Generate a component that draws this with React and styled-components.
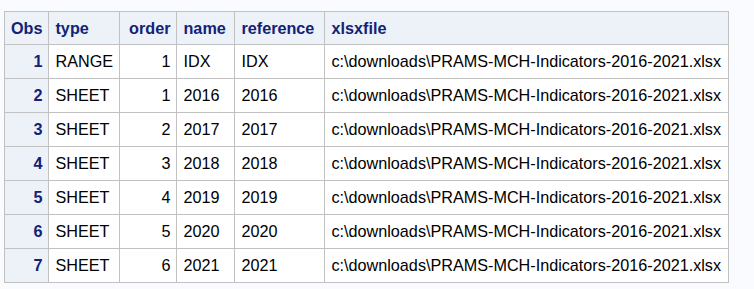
import React from 'react';
import styled, { createGlobalStyle } from 'styled-components';

const GlobalStyle = createGlobalStyle`
  html, body {
    margin: 0;
    padding: 0;
    background-color: #FAFBFE;
  }
`;

const Page = styled.div`
  padding: 11px 0 0 4px;
  min-height: 289px;
  box-sizing: border-box;
  background-color: #FAFBFE;
  font-family: 'Liberation Sans', Arial, sans-serif;
  font-size: 16.2px;
`;

const Table = styled.table`
  border-collapse: collapse;
  border-spacing: 0;
  table-layout: fixed;
  background-color: #fff;
  border: 1px solid #C1C1C1;
`;

const HeadCell = styled.th`
  background-color: #EDF2F9;
  color: #112277;
  font-weight: bold;
  text-align: ${(p) => (p.$right ? 'right' : 'left')};
  border: 1px solid #C1C1C1;
  height: 33px;
  padding: 0 6px 0 6px;
  white-space: nowrap;
  box-sizing: border-box;
`;

const ObsCell = styled.th`
  background-color: #EDF2F9;
  color: #112277;
  font-weight: bold;
  text-align: right;
  border: 1px solid #C1C1C1;
  height: 34px;
  padding: 0 6px 0 6px;
  box-sizing: border-box;
`;

const Cell = styled.td`
  color: #000;
  text-align: ${(p) => (p.$right ? 'right' : 'left')};
  border: 1px solid #C1C1C1;
  height: 34px;
  padding: 0 6px 0 6px;
  white-space: nowrap;
  box-sizing: border-box;
`;

const columns = [
  { key: 'obs', label: 'Obs', width: 44, right: true },
  { key: 'type', label: 'type', width: 71 },
  { key: 'order', label: 'order', width: 57, right: true },
  { key: 'name', label: 'name', width: 58 },
  { key: 'reference', label: 'reference', width: 90 },
  { key: 'xlsxfile', label: 'xlsxfile', width: 404 },
];

const FILE = 'c:\\downloads\\PRAMS-MCH-Indicators-2016-2021.xlsx';

const rows = [
  { obs: 1, type: 'RANGE', order: 1, name: 'IDX', reference: 'IDX' },
  { obs: 2, type: 'SHEET', order: 1, name: '2016', reference: '2016' },
  { obs: 3, type: 'SHEET', order: 2, name: '2017', reference: '2017' },
  { obs: 4, type: 'SHEET', order: 3, name: '2018', reference: '2018' },
  { obs: 5, type: 'SHEET', order: 4, name: '2019', reference: '2019' },
  { obs: 6, type: 'SHEET', order: 5, name: '2020', reference: '2020' },
  { obs: 7, type: 'SHEET', order: 6, name: '2021', reference: '2021' },
];

const App = () => (
  <Page>
    <GlobalStyle />
    <Table>
      <colgroup>
        {columns.map((c) => (
          <col key={c.key} style={{ width: c.width }} />
        ))}
      </colgroup>
      <thead>
        <tr>
          {columns.map((c) => (
            <HeadCell key={c.key} $right={c.right}>
              {c.label}
            </HeadCell>
          ))}
        </tr>
      </thead>
      <tbody>
        {rows.map((r) => (
          <tr key={r.obs}>
            <ObsCell>{r.obs}</ObsCell>
            <Cell>{r.type}</Cell>
            <Cell $right>{r.order}</Cell>
            <Cell>{r.name}</Cell>
            <Cell>{r.reference}</Cell>
            <Cell>{FILE}</Cell>
          </tr>
        ))}
      </tbody>
    </Table>
  </Page>
);

export default App;
